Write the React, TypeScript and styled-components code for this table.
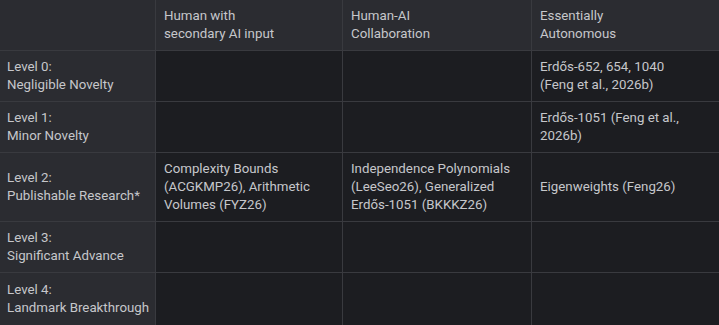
import styled, { createGlobalStyle } from "styled-components";

const GlobalStyle = createGlobalStyle`
  html, body {
    margin: 0;
    padding: 0;
    background: #1c1d21;
  }
`;

const Table = styled.div`
  display: grid;
  grid-template-columns: 155px 186px 188px 1fr;
  grid-template-rows: 50px 50px 50px 68px 50px 1fr;
  gap: 1px;
  width: 719px;
  height: 325px;
  overflow: hidden;
  background: #393a3f;
  font-family: Roboto, "Open Sans", sans-serif;
  font-size: 13.3px;
  line-height: 18px;
  color: #c6c7cb;
`;

const Cell = styled.div<{ $shaded?: boolean }>`
  display: flex;
  align-items: center;
  padding: 0 8px;
  background: ${(p) => (p.$shaded ? "#2b2c31" : "#1c1d21")};
  white-space: pre;
`;

const LevelCell = styled(Cell)`
  padding: 0 7px;
`;

const levels = [
  "Level 0:\nNegligible Novelty",
  "Level 1:\nMinor Novelty",
  "Level 2:\nPublishable Research*",
  "Level 3:\nSignificant Advance",
  "Level 4:\nLandmark Breakthrough",
];

const headers = [
  "",
  "Human with\nsecondary AI input",
  "Human-AI\nCollaboration",
  "Essentially\nAutonomous",
];

// one row per level: [secondary input, collaboration, autonomous]
const results: string[][] = [
  ["", "", "Erdős-652, 654, 1040\n(Feng et al., 2026b)"],
  ["", "", "Erdős-1051 (Feng et al.,\n2026b)"],
  [
    "Complexity Bounds\n(ACGKMP26), Arithmetic\nVolumes (FYZ26)",
    "Independence Polynomials\n(LeeSeo26), Generalized\nErdős-1051 (BKKKZ26)",
    "Eigenweights (Feng26)",
  ],
  ["", "", ""],
  ["", "", ""],
];

export default function App() {
  return (
    <>
      <GlobalStyle />
      <Table>
        {headers.map((h, i) => (
          <Cell key={`h${i}`} $shaded>
            {h}
          </Cell>
        ))}
        {levels.map((level, r) => [
          <LevelCell key={`l${r}`} $shaded>
            {level}
          </LevelCell>,
          ...results[r].map((text, c) => <Cell key={`c${r}-${c}`}>{text}</Cell>),
        ])}
      </Table>
    </>
  );
}
